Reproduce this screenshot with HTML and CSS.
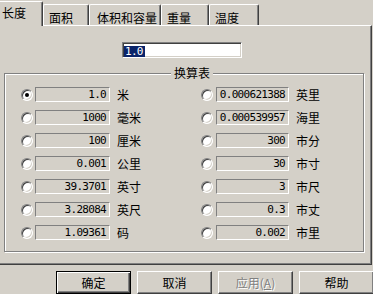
FILE: index.html
```html
<!DOCTYPE html>
<html lang="zh">
<head>
  <meta charset="UTF-8" />
  <title>单位换算</title>
  <link rel="stylesheet" href="styles.css">
</head>
<body>

  <div class="tabs">
    <div class="tab active">长度</div>
    <div class="tab">面积</div>
    <div class="tab wide">体积和容量</div>
    <div class="tab">重量</div>
    <div class="tab">温度</div>
  </div>

  <div class="panel">
    <div class="entry"><span class="sel">1.0</span></div>

    <fieldset class="group">
      <legend>换算表</legend>
      <div class="grid">
        <!-- left column -->
        <div class="cell"><span class="radio on"></span><span class="value">1.0</span><span class="unit">米</span></div>
        <div class="cell"><span class="radio"></span><span class="value">1000</span><span class="unit">毫米</span></div>
        <div class="cell"><span class="radio"></span><span class="value">100</span><span class="unit">厘米</span></div>
        <div class="cell"><span class="radio"></span><span class="value">0.001</span><span class="unit">公里</span></div>
        <div class="cell"><span class="radio"></span><span class="value">39.3701</span><span class="unit">英寸</span></div>
        <div class="cell"><span class="radio"></span><span class="value">3.28084</span><span class="unit">英尺</span></div>
        <div class="cell"><span class="radio"></span><span class="value">1.09361</span><span class="unit">码</span></div>
        <!-- right column -->
        <div class="cell right"><span class="radio"></span><span class="value">0.000621388</span><span class="unit">英里</span></div>
        <div class="cell right"><span class="radio"></span><span class="value">0.000539957</span><span class="unit">海里</span></div>
        <div class="cell right"><span class="radio"></span><span class="value">300</span><span class="unit">市分</span></div>
        <div class="cell right"><span class="radio"></span><span class="value">30</span><span class="unit">市寸</span></div>
        <div class="cell right"><span class="radio"></span><span class="value">3</span><span class="unit">市尺</span></div>
        <div class="cell right"><span class="radio"></span><span class="value">0.3</span><span class="unit">市丈</span></div>
        <div class="cell right"><span class="radio"></span><span class="value">0.002</span><span class="unit">市里</span></div>
      </div>
    </fieldset>
  </div>

  <div class="buttons">
    <button class="btn default">确定</button>
    <button class="btn">取消</button>
    <button class="btn" disabled>应用(<u>A</u>)</button>
    <button class="btn">帮助</button>
  </div>

</body>
</html>
```

FILE: styles.css
```css
* {
  margin: 0;
  padding: 0;
  box-sizing: border-box;
}

body {
  width: 373px;
  height: 294px;
  overflow: hidden;
  background: #d4d0c8;
  color: #000;
  font-family: "Noto Sans CJK SC", "Liberation Sans", sans-serif;
  font-size: 12px;
}

/* Tabs */
.tabs {
  display: flex;
  align-items: flex-end;
  height: 25px;
  margin-left: -2px;
}

.tab {
  height: 21px;
  padding: 5px 0 0 5px;
  line-height: 16px;
  white-space: nowrap;
  border: 1px solid;
  border-bottom: none;
  border-color: #fff #404040 transparent #fff;
  border-radius: 2px 2px 0 0;
  box-shadow: inset -1px 0 #808080;
}

.tab:nth-child(1) { width: 45px; }
.tab:nth-child(2) { width: 46px; }
.tab:nth-child(3) { width: 72px; }
.tab:nth-child(4) { width: 48px; }
.tab:nth-child(5) { width: 50px; }

.tab.wide {
  padding-left: 7px;
}

.tab.active {
  position: relative;
  z-index: 1;
  height: 25px;
  margin-bottom: -1px;
  padding-top: 3px;
  padding-left: 3px;
  background: #d4d0c8;
}

/* Panel */
.panel {
  width: 374px;
  height: 240px;
  margin-left: -2px;
  border: 1px solid;
  border-color: #fff #404040 #404040 #fff;
  box-shadow: inset -1px -1px #808080;
}

.entry {
  width: 120px;
  height: 16px;
  margin: 16px 0 0 123px;
  padding: 2px 0 0 1px;
  background: #fff;
  border: 1px solid;
  border-color: #808080 #fff #fff #808080;
  box-shadow: inset 1px 1px #404040, inset -1px -1px #d4d0c8;
  font: 11px "DejaVu Sans Mono", monospace;
  letter-spacing: -0.7px;
}

.sel {
  display: inline-block;
  height: 11px;
  padding: 0 2px 0 1px;
  line-height: 11px;
  background: #0a246a;
  color: #fff;
}

/* Group box */
.group {
  width: 360px;
  margin: 8px 0 0 5px;
  padding: 3px 0 7px 16px;
  border: 1px solid #808080;
  box-shadow: 1px 1px 0 #fff, inset 1px 1px 0 #fff;
}

.group legend {
  margin: 0 auto;
  padding: 0 3px;
  line-height: 14px;
  background: #d4d0c8;
}

.grid {
  display: grid;
  grid-template-columns: 180px 1fr;
  grid-template-rows: repeat(7, 23px);
  grid-auto-flow: column;
}

.cell {
  display: flex;
  align-items: center;
}

.radio {
  display: flex;
  align-items: center;
  justify-content: center;
  width: 12px;
  height: 12px;
  margin-right: 2px;
  border-radius: 50%;
  background: #fff;
  border: 1px solid;
  border-color: #808080 #fff #fff #808080;
  box-shadow: inset 1px 1px #404040, inset -1px -1px #d4d0c8;
}

.radio.on::after {
  content: "";
  width: 4px;
  height: 4px;
  border-radius: 50%;
  background: #000;
}

.value {
  width: 75px;
  height: 15px;
  padding-right: 3px;
  text-align: right;
  border: 1px solid;
  border-color: #808080 #fff #fff #808080;
  font: 11px "DejaVu Sans Mono", monospace;
  line-height: 13px;
  letter-spacing: -0.7px;
}

.unit {
  margin-left: 7px;
}

.right .radio {
  margin-right: 3px;
}

.right .value {
  width: 73px;
}

/* Buttons */
.buttons {
  display: flex;
  gap: 6px;
  margin: 6px 0 0 56px;
}

.btn {
  flex: none;
  width: 75px;
  height: 23px;
  background: #d4d0c8;
  color: #000;
  font: inherit;
  border: 1px solid;
  border-color: #fff #404040 #404040 #fff;
  box-shadow: inset -1px -1px #808080;
}

.btn.default {
  border-color: #000;
  box-shadow: inset 1px 1px #fff, inset -1px -1px #404040, inset -2px -2px #808080;
}

.btn:disabled {
  color: #808080;
  text-shadow: 1px 1px #fff;
}
```
